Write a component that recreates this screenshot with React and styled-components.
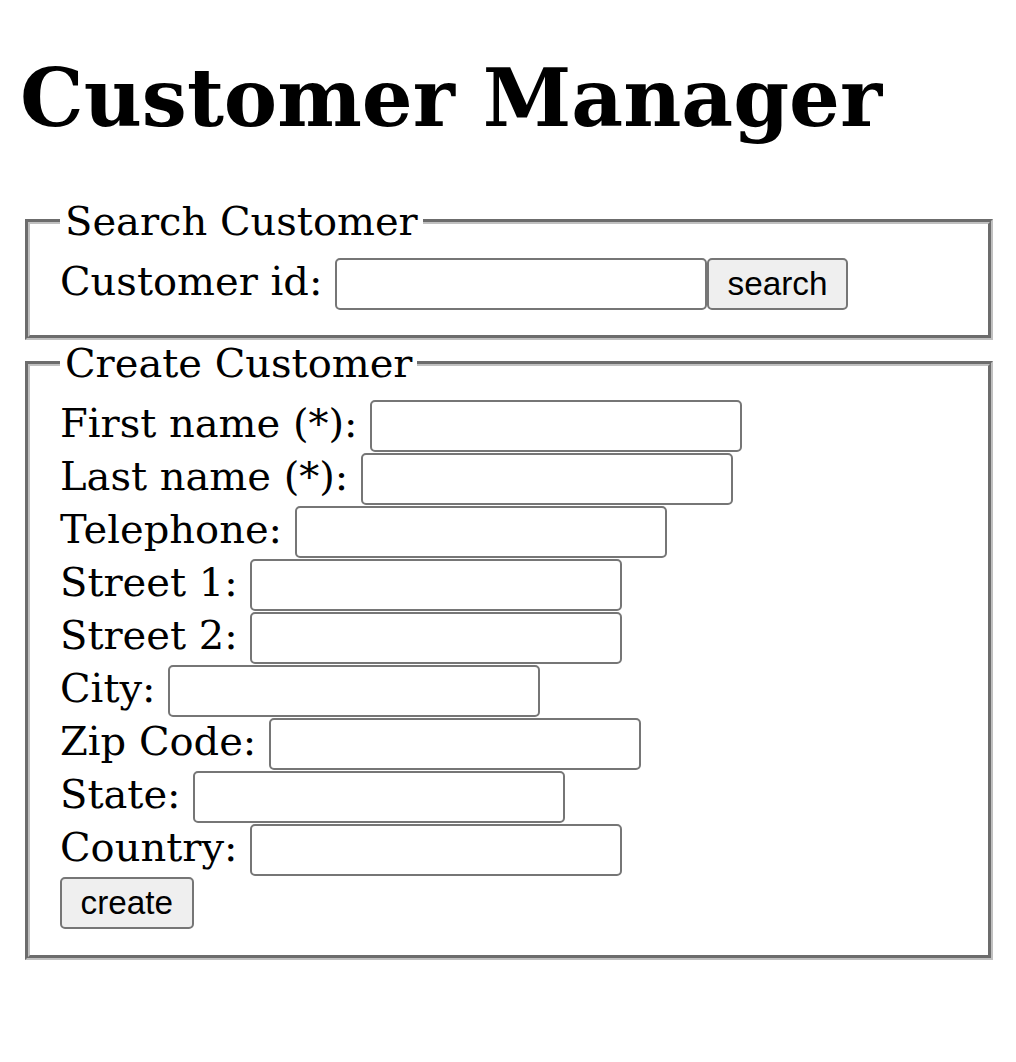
import React from "react";
import styled, { createGlobalStyle } from "styled-components";

const GlobalStyle = createGlobalStyle`
  html, body { background: #ffffff; }
  body {
    margin: 20px;
    font-family: "DejaVu Serif", serif;
    font-size: 40px;
    color: #000000;
  }
`;

const Title = styled.h1`
  font-family: "DejaVu Serif", serif;
  font-size: 80px;
  font-weight: bold;
  margin: 30.5px 0 53.6px;
`;

const Form = styled.form`
  margin: 0;
`;

const Fieldset = styled.fieldset`
  margin: 0 3px 0 5px;
  border: 5px groove rgb(192, 192, 192);
  padding: 14px 30px 25px;
  min-width: min-content;
`;

const Legend = styled.legend`
  padding: 0 5px;
`;

const Row = styled.div`
  white-space: nowrap;
  height: ${(p) => p.$h || 53}px;
`;

const Label = styled.label`
  font-family: "DejaVu Serif", serif;
  font-size: 40px;
`;

const TextInput = styled.input`
  box-sizing: border-box;
  width: 372px;
  height: 51.5px;
  margin: 0;
  padding: 2px 5px;
  border: 2.5px solid #767676;
  border-radius: 5px;
  background: #ffffff;
  font-family: "Liberation Sans", Arial, sans-serif;
  font-size: 33.3px;
  vertical-align: baseline;
`;

const Button = styled.button`
  box-sizing: border-box;
  height: 51.5px;
  margin: 0;
  padding: 0 18.5px;
  border: 2.5px solid #767676;
  border-radius: 5px;
  background: #efefef;
  color: #000000;
  font-family: "Liberation Sans", Arial, sans-serif;
  font-size: 33.3px;
  cursor: pointer;
`;

const fields = [
  "First name (*):",
  "Last name (*):",
  "Telephone:",
  "Street 1:",
  "Street 2:",
  "City:",
  "Zip Code:",
  "State:",
  "Country:",
];

export default function App() {
  return (
    <>
      <GlobalStyle />
      <Title>Customer Manager</Title>
      <Form onSubmit={(e) => e.preventDefault()}>
        <Fieldset>
          <Legend>Search Customer</Legend>
          <Row $h={52}>
            <Label>Customer id: </Label>
            <TextInput type="text" />
            <Button type="button">search</Button>
          </Row>
        </Fieldset>
        <Fieldset>
          <Legend>Create Customer</Legend>
          {fields.map((f) => (
            <Row key={f}>
              <Label>{f} </Label>
              <TextInput type="text" />
            </Row>
          ))}
          <Row $h={53}>
            <Button type="button">create</Button>
          </Row>
        </Fieldset>
      </Form>
    </>
  );
}
